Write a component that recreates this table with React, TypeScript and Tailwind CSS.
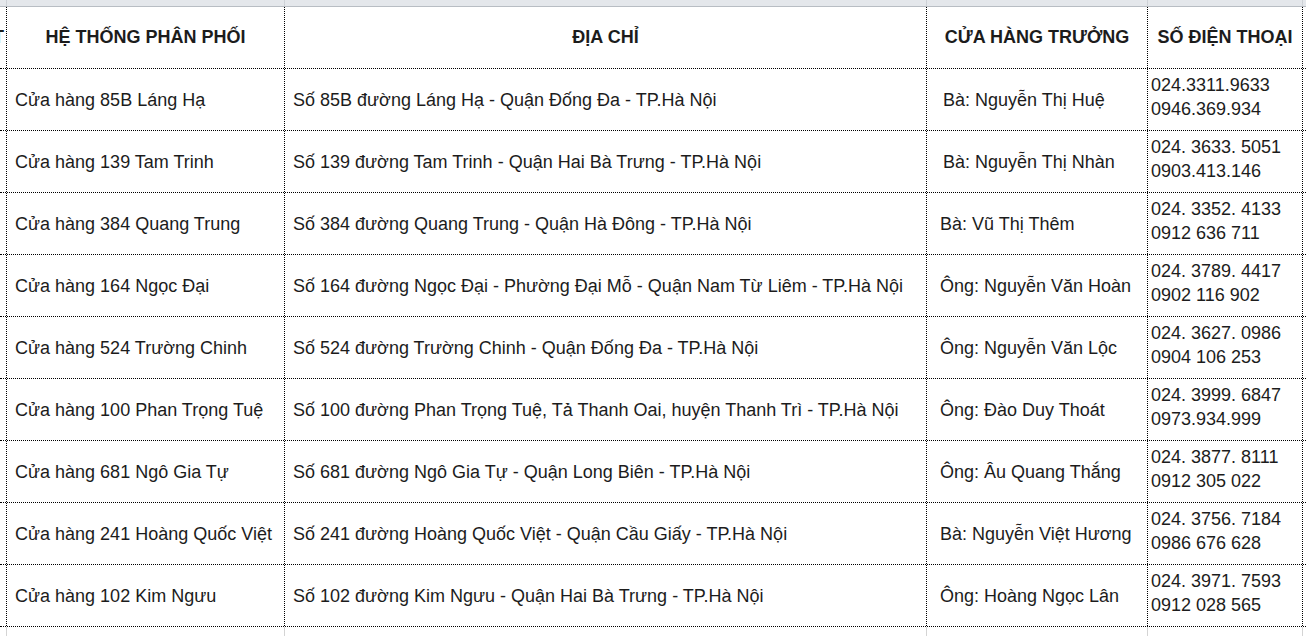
const rows = [
  {
    store: "Cửa hàng 85B Láng Hạ",
    address: "Số 85B đường Láng Hạ - Quận Đống Đa - TP.Hà Nội",
    manager: "Bà: Nguyễn Thị Huệ",
    indent: true,
    phones: ["024.3311.9633", "0946.369.934"],
  },
  {
    store: "Cửa hàng 139 Tam Trinh",
    address: "Số 139 đường Tam Trinh - Quận Hai Bà Trưng - TP.Hà Nội",
    manager: "Bà: Nguyễn Thị Nhàn",
    indent: true,
    phones: ["024. 3633. 5051", "0903.413.146"],
  },
  {
    store: "Cửa hàng 384 Quang Trung",
    address: "Số 384 đường Quang Trung - Quận Hà Đông - TP.Hà Nội",
    manager: "Bà: Vũ Thị Thêm",
    phones: ["024. 3352. 4133", "0912 636 711"],
  },
  {
    store: "Cửa hàng 164 Ngọc Đại",
    address: "Số 164 đường Ngọc Đại - Phường Đại Mỗ - Quận Nam Từ Liêm - TP.Hà Nội",
    manager: "Ông: Nguyễn Văn Hoàn",
    phones: ["024. 3789. 4417", "0902 116 902"],
  },
  {
    store: "Cửa hàng 524 Trường Chinh",
    address: "Số 524 đường Trường Chinh - Quận Đống Đa - TP.Hà Nội",
    manager: "Ông: Nguyễn Văn Lộc",
    phones: ["024. 3627. 0986", "0904 106 253"],
  },
  {
    store: "Cửa hàng 100 Phan Trọng Tuệ",
    address: "Số 100 đường Phan Trọng Tuệ, Tả Thanh Oai, huyện Thanh Trì - TP.Hà Nội",
    manager: "Ông: Đào Duy Thoát",
    phones: ["024. 3999. 6847", "0973.934.999"],
  },
  {
    store: "Cửa hàng 681 Ngô Gia Tự",
    address: "Số 681 đường Ngô Gia Tự - Quận Long Biên - TP.Hà Nội",
    manager: "Ông: Âu Quang Thắng",
    phones: ["024. 3877. 8111", "0912 305 022"],
  },
  {
    store: "Cửa hàng 241 Hoàng Quốc Việt",
    address: "Số 241 đường Hoàng Quốc Việt - Quận Cầu Giấy - TP.Hà Nội",
    manager: "Bà: Nguyễn Việt Hương",
    phones: ["024. 3756. 7184", "0986 676 628"],
  },
  {
    store: "Cửa hàng 102 Kim Ngưu",
    address: "Số 102 đường Kim Ngưu - Quận Hai Bà Trưng - TP.Hà Nội",
    manager: "Ông: Hoàng Ngọc Lân",
    phones: ["024. 3971. 7593", "0912 028 565"],
  },
];

const cell = "border-r border-dotted border-black flex items-center";

export default function App() {
  return (
    <div
      className="w-[1306px] h-[636px] overflow-hidden bg-white text-[#1c1c1c] text-[18px]"
      style={{ fontFamily: '"Liberation Sans", Arial, sans-serif' }}
    >
      {/* strip of the row above, cut off */}
      <div className="flex h-[7px] bg-[#e4e7eb] border-b border-[#b8bdc3]">
        <div className="w-[7px] border-r border-[#cdd1d6]" />
        <div className="w-[278px] border-r border-[#cdd1d6]" />
        <div className="w-[642px] border-r border-[#cdd1d6]" />
        <div className="w-[221px] border-r border-[#cdd1d6]" />
        <div className="w-[155px] border-r border-[#cdd1d6]" />
      </div>

      {/* header */}
      <div className="flex h-[62px] border-b border-dotted border-black font-bold">
        <div className={`${cell} w-[7px] overflow-hidden`}>
          <span className="-ml-[7px]">T</span>
        </div>
        <div className={`${cell} w-[278px] justify-center`}>HỆ THỐNG PHÂN PHỐI</div>
        <div className={`${cell} w-[642px] justify-center`}>ĐỊA CHỈ</div>
        <div className={`${cell} w-[221px] justify-center`}>CỬA HÀNG TRƯỞNG</div>
        <div className={`${cell} w-[155px] justify-center`}>SỐ ĐIỆN THOẠI</div>
      </div>

      {rows.map((r) => (
        <div key={r.store} className="flex h-[62px] border-b border-dotted border-black">
          <div className={`${cell} w-[7px]`} />
          <div className={`${cell} w-[278px] pl-[8px] pt-[2px] whitespace-nowrap`}>{r.store}</div>
          <div className={`${cell} w-[642px] pl-[8px] pt-[2px] whitespace-nowrap`}>{r.address}</div>
          <div
            className={`${cell} w-[221px] pt-[2px] whitespace-nowrap ${r.indent ? "pl-[16px]" : "pl-[13px]"}`}
          >
            {r.manager}
          </div>
          <div className="border-r border-dotted border-black w-[155px] pl-[3px] pt-[4px] leading-[24px] whitespace-nowrap">
            {r.phones.map((p) => (
              <div key={p}>{p}</div>
            ))}
          </div>
        </div>
      ))}

      {/* next row, cut off */}
      <div className="flex h-[12px]">
        <div className="w-[7px] border-r border-[#d4d4d4]" />
        <div className="w-[278px] border-r border-[#d4d4d4]" />
        <div className="w-[642px] border-r border-[#d4d4d4]" />
        <div className="w-[221px] border-r border-[#d4d4d4]" />
        <div className="w-[155px] border-r border-[#d4d4d4]" />
      </div>
    </div>
  );
}
